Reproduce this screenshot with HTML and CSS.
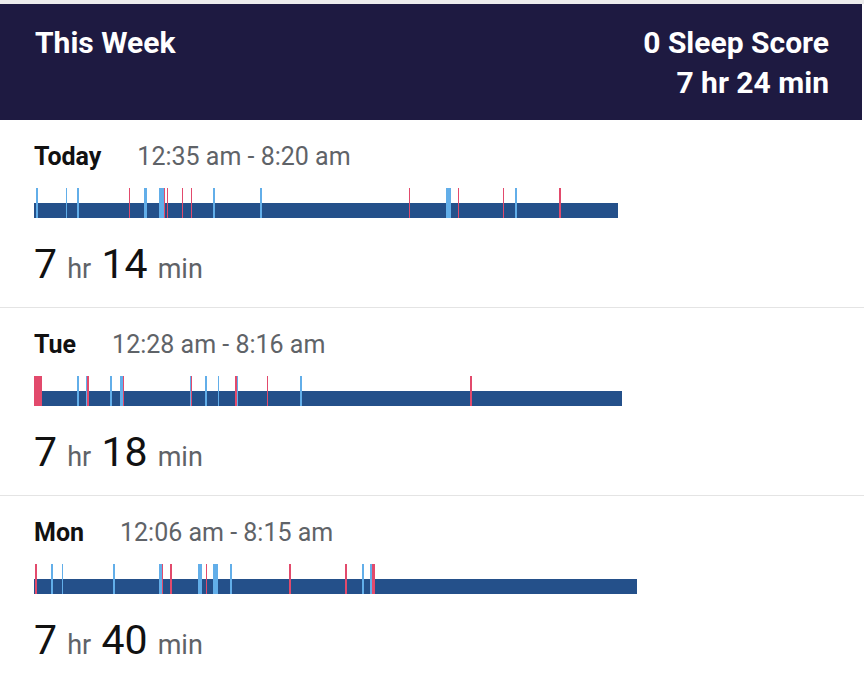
FILE: index.html
```html
<!DOCTYPE html>
<html>
  <head>
    <meta charset="UTF-8">
    <title>Sleep - This Week</title>
    <link rel="stylesheet" href="styles.css">
  </head>
<body>
	<div class="week-head">
		<div class="week-title">This Week</div>
		<div class="week-sum">
			<div>0 Sleep Score</div>
			<div>7 hr 24 min</div>
		</div>
	</div>

	<div class="night" id="night0">
		<div class="night-top"><span class="day">Today</span><span class="range">12:35 am - 8:20 am</span></div>
		<div class="stages" style="width:584px"><div class="bar"></div></div>
		<div class="total"><span class="num">7</span> <span class="unit">hr</span> <span class="num">14</span> <span class="unit">min</span></div>
	</div>
	<div class="night" id="night1">
		<div class="night-top"><span class="day">Tue</span><span class="range">12:28 am - 8:16 am</span></div>
		<div class="stages" style="width:588px"><div class="bar"></div></div>
		<div class="total"><span class="num">7</span> <span class="unit">hr</span> <span class="num">18</span> <span class="unit">min</span></div>
	</div>
	<div class="night" id="night2">
		<div class="night-top"><span class="day">Mon</span><span class="range">12:06 am - 8:15 am</span></div>
		<div class="stages" style="width:603px"><div class="bar"></div></div>
		<div class="total"><span class="num">7</span> <span class="unit">hr</span> <span class="num">40</span> <span class="unit">min</span></div>
	</div>

<script>
// awake (a) and restless (r) marks for each night: [x offset, width, type]
var marks=[
	[[2,1.5,'a'],[32,1,'a'],[43,2,'a'],[94.5,1,'r'],[110,2.5,'a'],[125,5,'a'],[130,1,'r'],[132.5,1,'r'],
	 [148,1,'r'],[157,1,'r'],[179,2,'a'],[225.5,2,'a'],[374.5,1.5,'r'],[412,5,'a'],[423.5,1.5,'r'],
	 [468.5,1.5,'r'],[481,1.5,'a'],[525,1.5,'r']],
	[[0,8,'r'],[43,2,'a'],[51.5,1,'a'],[52.5,2,'r'],[76,2,'a'],[85.5,4,'a'],[89,1,'r'],[156,1,'a'],
	 [157,1,'r'],[171,1.5,'a'],[183.5,1.5,'a'],[201,2.5,'r'],[203,1,'a'],[232.5,1.5,'r'],[266,2,'a'],
	 [436,1.5,'r']],
	[[1,1.5,'r'],[17,1.5,'a'],[27.5,1.5,'a'],[78.5,2,'a'],[124.5,3,'a'],[127.5,1,'r'],[136,1.5,'r'],
	 [164,3.5,'a'],[171.5,1.5,'r'],[178.5,5,'a'],[195.5,2,'a'],[254.5,2,'r'],[311,1.5,'r'],[327.5,2,'a'],
	 [335.5,2,'a'],[337.5,1,'r'],[339,1.5,'r']]
];
for(var n=0;n<marks.length;n++){
	var box=document.querySelector('#night'+n+' .stages');
	for(var i=0;i<marks[n].length;i++){
		var m=marks[n][i],tick=document.createElement('div');
		tick.className='tick '+(m[2]=='a'?'awake':'restless');
		tick.style.left=m[0]+'px';
		tick.style.width=m[1]+'px';
		box.appendChild(tick);
	}
}
</script>
</body>
</html>
```

FILE: styles.css
```css
body{
	margin:0;
	border-top:4px solid #ececec;
	background:#fff;
	font-family:Roboto,"Liberation Sans",sans-serif;
	color:#111;
}
.week-head{
	display:flex;
	justify-content:space-between;
	margin-right:2px;
	padding:19px 33px 17px 35px;
	background:#1e1a41;
	color:#fff;
	font-size:30px;
	font-weight:700;
	line-height:40px;
}
.week-sum{
	text-align:right;
}
.night{
	padding:23px 0 19px 34px;
	border-bottom:1px solid #e4e4e4;
}
.night-top{
	font-size:25px;
	line-height:28px;
}
.day{
	font-weight:700;
	margin-right:36px;
}
.range{
	color:#5f6368;
}
.stages{
	position:relative;
	height:30px;
	margin-top:17px;
}
.bar{
	position:absolute;
	left:0;
	right:0;
	bottom:0;
	height:15px;
	background:#24508a;
}
.tick{
	position:absolute;
	top:0;
	bottom:0;
}
.awake{
	background:#62aee9;
}
.restless{
	background:#e24a6c;
}
.total{
	margin-top:22px;
	font-size:41px;
	line-height:48px;
}
.num{
	color:#111;
}
.unit{
	font-size:27px;
	line-height:1;
	color:#5f6368;
}
```
